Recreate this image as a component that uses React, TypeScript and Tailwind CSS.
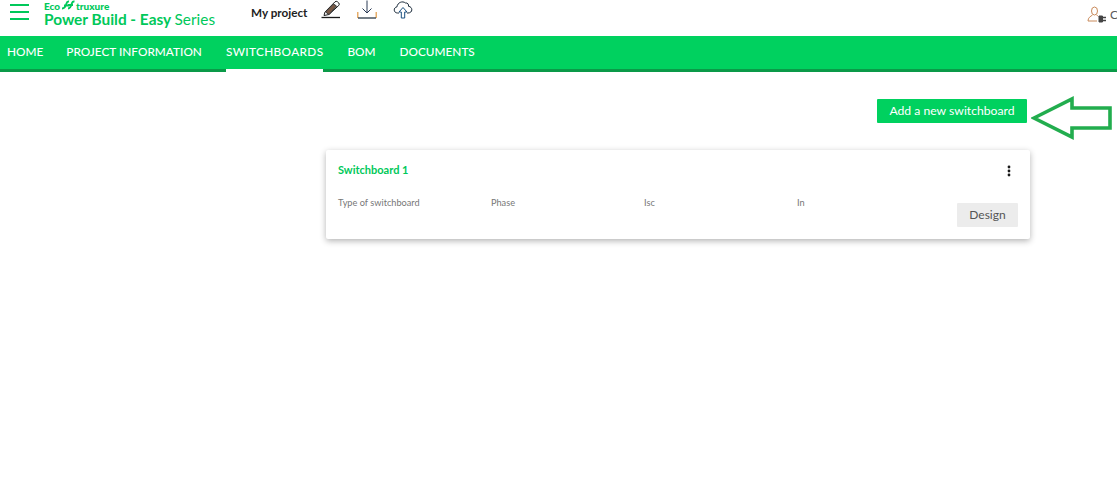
const font = { fontFamily: 'Lato, sans-serif' };

function PencilIcon() {
  return (
    <svg width="20" height="19" viewBox="0 0 20 19" fill="none" stroke="#1a1a1a" strokeWidth="1">
      <path d="M4 12 L14 1.8 Q15.2 0.8 16.5 1.8 L17.8 3 Q18.8 4.2 17.8 5.4 L8 14.5 L3 15.5 Z" />
      <path d="M4.5 12 L8 14.5 L15.5 6 L12.5 4 Z" fill="#7a5a45" stroke="#3a3a3a" />
      <path d="M0.5 17.5 H19" strokeWidth="1.3" />
    </svg>
  );
}

function DownloadIcon() {
  return (
    <svg width="20" height="19" viewBox="0 0 20 19" fill="none" stroke="#1a2a3a" strokeWidth="1">
      <path d="M10 0.5 V13 M5.5 8.5 L10 13 L14.5 8.5" stroke="#2a3a55" />
      <path d="M0.8 12 V18 M19.2 12 V18" stroke="#e09a45" strokeWidth="1.2" />
      <path d="M1 18 H19" strokeWidth="1.2" />
    </svg>
  );
}

function CloudIcon() {
  return (
    <svg width="20" height="19" viewBox="0 0 20 19" fill="none" stroke="#1a2a3a" strokeWidth="1">
      <path d="M6 13 H4.5 C0.5 13 0 7.5 4 6.8 C4.5 2.5 9.5 0.5 12.5 3 C14.5 2.5 16 4.5 15.5 6.3 C20 6.8 20 13 15 13 H14" />
      <path d="M10 7.5 L14 12 H11.7 V18 H8.3 V12 H6 Z" stroke="#1a4f80" />
    </svg>
  );
}

function UserPlugIcon() {
  return (
    <svg width="22" height="18" viewBox="0 0 22 18" fill="none" stroke="#444" strokeWidth="1">
      <ellipse cx="7.5" cy="5" rx="3" ry="4" stroke="#c98a5a" />
      <path d="M1 15 C1 11.5 3.5 10.5 5.5 9 M9.5 9 C10.5 9.5 11 10 11.5 10.5 M1 15 H10" stroke="#c98a5a" />
      <path d="M12 10 H15.5 V16 H12 Z" fill="#444" />
      <path d="M15.5 11.5 H19 M15.5 14.5 H19" strokeWidth="1.3" />
    </svg>
  );
}

export default function App() {
  return (
    <div className="relative h-[503px] w-full overflow-hidden bg-white" style={font}>
      <header className="flex h-9 items-start">
        <button className="ml-[10px] mt-[4px] flex w-[19px] flex-col gap-[5px]">
          <span className="h-[2px] bg-[#00c85a]" />
          <span className="h-[2px] bg-[#00c85a]" />
          <span className="h-[2px] bg-[#00c85a]" />
        </button>
        <div className="ml-[15px] flex flex-col">
          <div className="flex h-[12px] items-start text-[10px] font-black leading-[12px] text-[#00c85a]">
            <span>Eco</span>
            <svg width="14" height="10" viewBox="0 0 14 9" fill="none" stroke="#00c85a" strokeWidth="1.9" className="mx-[1px]">
              <path d="M1 8 C4 8 5 5 5.5 3 C6 1 7 0.8 8 1 M3 5 H8 M7 8 C10 8 10.5 4 11 2.5 C11.5 1 12.5 0.8 13.5 1 M7 4.5 H12" />
            </svg>
            <span>truxure</span>
          </div>
          <div className="-mt-px whitespace-nowrap text-[15.4px] font-bold leading-4 text-[#00c85a]">
            Power Build - Easy <span className="font-normal">Series</span>
          </div>
        </div>
        <span className="ml-[36px] mt-[4px] text-[11.7px] font-bold leading-4 text-[#222]">My project</span>
        <div className="ml-[14px] flex gap-[16px]">
          <PencilIcon />
          <DownloadIcon />
          <CloudIcon />
        </div>
        <div className="ml-auto mt-[6px] flex items-center gap-[1px]">
          <UserPlugIcon />
          <span className="w-[7px] overflow-hidden text-[12px] leading-4 text-[#5a5a5a]">C</span>
        </div>
      </header>

      <nav className="flex h-9 items-stretch border-b-[3px] border-[#0a9a48] bg-[#00d15f] pl-[7px] text-[11.8px] font-medium text-white">
        <a className="mr-[23px] flex items-center pb-px">HOME</a>
        <a className="mr-[24px] flex items-center pb-px">PROJECT INFORMATION</a>
        <a className="relative mr-[24px] flex items-center pb-px tracking-[0.35px]">
          SWITCHBOARDS
          <span className="absolute -bottom-[3px] left-0 right-0 h-[3px] bg-white" />
        </a>
        <a className="mr-[24px] flex items-center pb-px">BOM</a>
        <a className="flex items-center pb-px">DOCUMENTS</a>
      </nav>

      <main>
        <div className="flex justify-end pr-[90px] pt-[27px]">
          <button className="h-6 w-[150px] rounded-[1px] bg-[#00d15f] text-[12.2px] text-white">Add a new switchboard</button>
        </div>
        <section className="ml-[326px] mt-[27px] h-[89px] w-[704px] rounded-[2px] bg-white pl-3 pr-3 shadow-[0_2px_6px_rgba(0,0,0,0.3)]">
          <div className="flex h-[40px] items-center justify-between pt-px">
            <h2 className="text-[11px] font-bold text-[#00c85a]">Switchboard 1</h2>
            <svg width="4" height="12" viewBox="0 0 4 12" className="mr-[7px]" fill="#1a1a1a">
              <circle cx="2" cy="2" r="1.4" />
              <circle cx="2" cy="6" r="1.4" />
              <circle cx="2" cy="10" r="1.4" />
            </svg>
          </div>
          <div className="flex items-start justify-between">
            <div className="grid w-[612px] grid-cols-4 pt-[7px] text-[9.2px] leading-3 text-[#777]">
              <span>Type of switchboard</span>
              <span>Phase</span>
              <span>Isc</span>
              <span>In</span>
            </div>
            <button className="mt-[13px] h-6 w-[61px] rounded-[1px] bg-[#ececec] text-[12px] text-[#555]">Design</button>
          </div>
        </section>
      </main>

      <svg width="84" height="46" viewBox="0 0 84 46" fill="none" stroke="#22ad4e" strokeWidth="3.6" className="absolute left-[1031px] top-[95px]">
        <path d="M3 23 L41 4 V13 H79 V33 H41 V42 Z" />
      </svg>
    </div>
  );
}
